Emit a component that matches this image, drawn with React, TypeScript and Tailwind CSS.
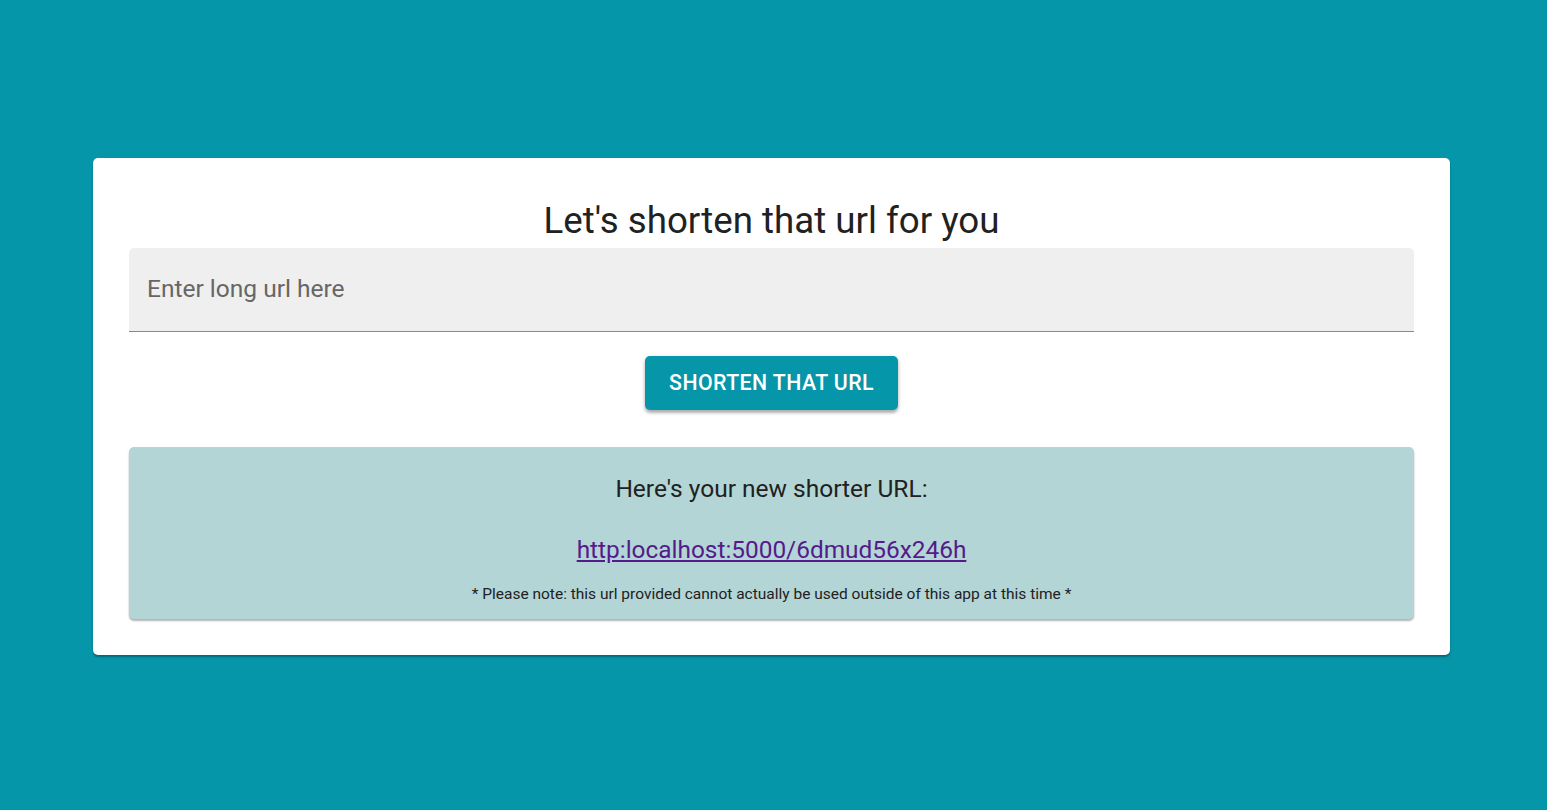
export default function App() {
  return (
    <div className="min-h-[810px] w-full bg-[#0596a9] pt-[158px] font-['Roboto',sans-serif]">
      <div className="ml-[93px] w-[1357px] rounded-[5px] bg-white px-9 pb-9 pt-[41px] shadow-[0_2px_2px_rgba(0,0,0,0.3)]">
        <h1 className="text-center text-[36.7px] leading-[44px] text-[#212121]">Let's shorten that url for you</h1>
        <div className="mt-[5px] flex h-[84px] items-center rounded-t-[5px] border-b border-[#8a8a8a] bg-[#efefef] px-[18px]">
          <input
            placeholder="Enter long url here"
            className="w-full bg-transparent text-[24.5px] text-[#212121] outline-none placeholder:text-[#666666]"
          />
        </div>
        <div className="mt-[24px] flex justify-center">
          <button className="h-[54px] w-[253px] rounded-[5px] bg-[#0596a9] text-[21.3px] font-medium tracking-[0.02em] text-white shadow-[0_3px_3px_rgba(0,0,0,0.25),0_1px_5px_rgba(0,0,0,0.15)]">
            SHORTEN THAT URL
          </button>
        </div>
        <div className="mt-[37px] flex h-[172px] flex-col items-center rounded-[5px] bg-[#b3d5d6] pt-[27px] shadow-[0_2px_2px_rgba(0,0,0,0.3)]">
          <p className="text-[24.5px] leading-[30px] text-[#212121]">Here's your new shorter URL:</p>
          <a href="#" className="mt-[31px] text-[24.4px] leading-[30px] text-[#551a8b] underline">
            http:localhost:5000/6dmud56x246h
          </a>
          <p className="mt-[19px] text-[15.5px] leading-[20px] text-[#212121]">
            * Please note: this url provided cannot actually be used outside of this app at this time *
          </p>
        </div>
      </div>
    </div>
  );
}
